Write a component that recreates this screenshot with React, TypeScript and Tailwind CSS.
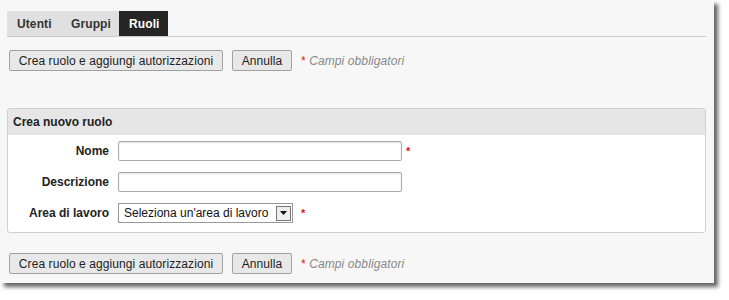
export default function App() {
  const buttons = (
    <div className="flex items-center gap-[9px] pl-[9px]">
      <button className="h-[21px] w-[214px] border border-[#a0a0a0] rounded-[2px] bg-[#e8e8e8] text-[12px] tracking-[0.08px] text-[#222] leading-none">
        Crea ruolo e aggiungi autorizzazioni
      </button>
      <button className="h-[21px] w-[60px] border border-[#a0a0a0] rounded-[2px] bg-[#e8e8e8] text-[12px] tracking-[0.1px] text-[#222] leading-none">
        Annulla
      </button>
      <span className="text-[12px] italic tracking-[0.1px] text-[#888]">
        <span className="text-[#e02020] not-italic">*</span> Campi obbligatori
      </span>
    </div>
  );

  return (
    <div className="w-[729px] h-[300px] bg-white font-['Liberation_Sans',Arial,sans-serif]">
      <div className="w-[714px] h-[283px] bg-[#f7f7f7] shadow-[4px_4px_4px_rgba(0,0,0,0.6)] pt-[11px]">
        {/* tabs */}
        <div className="mx-[7px] w-[699px] flex border-b border-[#cccccc] text-[12px] font-bold tracking-[0.1px]">
          <div className="h-[25px] w-[50px] flex items-center pl-[10px] bg-[#e0e0e0] text-[#333]">Utenti</div>
          <div className="h-[25px] w-[62px] flex items-center pl-[14px] bg-[#e0e0e0] text-[#333]">Gruppi</div>
          <div className="h-[25px] w-[49px] flex items-center pl-[10px] bg-[#262626] text-white">Ruoli</div>
        </div>

        <div className="mt-[13px]">{buttons}</div>

        {/* form box */}
        <div className="mt-[37px] mx-[7px] w-[699px] h-[125px] border border-[#d0d0d0] rounded-[3px] bg-white overflow-hidden">
          <div className="h-[26px] bg-[#e6e6e6] flex items-center pl-[5px] text-[12px] font-bold text-[#222]">
            Crea nuovo ruolo
          </div>
          <div className="flex flex-col gap-[11px] pt-[6px] text-[12px]">
            <div className="flex items-center">
              <label className="w-[101px] text-right font-bold text-[#222]">Nome</label>
              <div className="ml-[9px] w-[284px] h-[20px] border border-[#aaa] rounded-[2px] bg-white shadow-[inset_0_1px_2px_rgba(0,0,0,0.12)]" />
              <span className="ml-[4px] text-[#d02020] text-[11px] font-bold">*</span>
            </div>
            <div className="flex items-center">
              <label className="w-[101px] text-right font-bold text-[#222]">Descrizione</label>
              <div className="ml-[9px] w-[284px] h-[20px] border border-[#aaa] rounded-[2px] bg-white shadow-[inset_0_1px_2px_rgba(0,0,0,0.12)]" />
            </div>
            <div className="flex items-center">
              <label className="w-[101px] text-right font-bold text-[#222]">Area di lavoro</label>
              <div className="ml-[9px] w-[175px] h-[20px] border border-[#999] bg-white flex items-center justify-between pl-[5px] pr-[1px] text-[12px] text-[#111]">
                <span>Seleziona un'area di lavoro</span>
                <span className="w-[15px] h-[15px] border border-[#777] bg-[#eee] flex items-center justify-center">
                  <svg width="7" height="4" viewBox="0 0 7 4">
                    <path d="M0 0h7L3.5 4z" fill="#111" />
                  </svg>
                </span>
              </div>
              <span className="ml-[8px] text-[#d02020] text-[11px] font-bold">*</span>
            </div>
          </div>
        </div>

        <div className="mt-[20px]">{buttons}</div>
      </div>
    </div>
  );
}
